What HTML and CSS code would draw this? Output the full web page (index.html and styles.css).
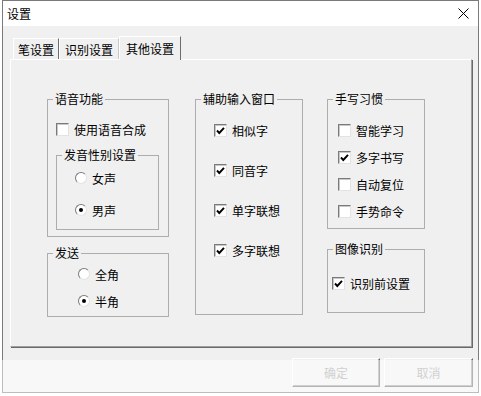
FILE: index.html
```html
<!DOCTYPE html>
<html lang="zh-CN">
<head>
    <meta charset="UTF-8">
    <meta name="viewport" content="width=device-width, initial-scale=1.0">
    <title>设置</title>
    <link rel="stylesheet" href="styles.css">
</head>
<body>

<div class="window">
  <div class="titlebar">
    <span class="title">设置</span>
    <svg class="close" width="11" height="11" viewBox="0 0 11 11">
      <path d="M0.5 0.5 L10.5 10.5 M10.5 0.5 L0.5 10.5" stroke="#000" stroke-width="1" fill="none"/>
    </svg>
  </div>

  <div class="dlg-body">
    <div class="tabs">
      <div class="tab tab-pen">笔设置</div>
      <div class="tab tab-rec">识别设置</div>
      <div class="tab tab-active">其他设置</div>
    </div>

    <div class="panel">
      <!-- 第一列 -->
      <div class="col col1">
        <div class="group g-voice">
          <span class="legend">语音功能</span>
          <div class="row voice-row"><span class="ck"></span>使用语音合成</div>
          <div class="group g-gender">
            <span class="legend">发音性别设置</span>
            <div class="row"><span class="rd"></span>女声</div>
            <div class="row"><span class="rd on"></span>男声</div>
          </div>
        </div>
        <div class="group g-send">
          <span class="legend">发送</span>
          <div class="row"><span class="rd"></span>全角</div>
          <div class="row"><span class="rd on"></span>半角</div>
        </div>
      </div>

      <!-- 第二列 -->
      <div class="col col2">
        <div class="group g-assist">
          <span class="legend">辅助输入窗口</span>
          <div class="row"><span class="ck on"><svg viewBox="0 0 11 11"><path d="M2 5.5 L4.3 8 L9 2.8"/></svg></span>相似字</div>
          <div class="row"><span class="ck on"><svg viewBox="0 0 11 11"><path d="M2 5.5 L4.3 8 L9 2.8"/></svg></span>同音字</div>
          <div class="row"><span class="ck on"><svg viewBox="0 0 11 11"><path d="M2 5.5 L4.3 8 L9 2.8"/></svg></span>单字联想</div>
          <div class="row"><span class="ck on"><svg viewBox="0 0 11 11"><path d="M2 5.5 L4.3 8 L9 2.8"/></svg></span>多字联想</div>
        </div>
      </div>

      <!-- 第三列 -->
      <div class="col col3">
        <div class="group g-habit">
          <span class="legend">手写习惯</span>
          <div class="row"><span class="ck"></span>智能学习</div>
          <div class="row"><span class="ck on"><svg viewBox="0 0 11 11"><path d="M2 5.5 L4.3 8 L9 2.8"/></svg></span>多字书写</div>
          <div class="row"><span class="ck"></span>自动复位</div>
          <div class="row"><span class="ck"></span>手势命令</div>
        </div>
        <div class="group g-image">
          <span class="legend">图像识别</span>
          <div class="row"><span class="ck on"><svg viewBox="0 0 11 11"><path d="M2 5.5 L4.3 8 L9 2.8"/></svg></span>识别前设置</div>
        </div>
      </div>
    </div>

    <div class="buttons">
      <button class="btn btn-ok" disabled>确定</button>
      <button class="btn btn-cancel" disabled>取消</button>
    </div>
  </div>
</div>

<div class="overlay"></div>

</body>
</html>
```

FILE: styles.css
```css
* { box-sizing: border-box; }

body {
  margin: 0;
  width: 481px;
  height: 396px;
  background: #fff;
  position: relative;
  overflow: hidden;
  font-family: "Noto Sans CJK SC", "Noto Sans", sans-serif;
  font-size: 12px;
  color: #000;
}

.window {
  margin-left: 2px;
  width: 477px;
  height: 393px;
  border: 1px solid #7a7a7a;
  background: #f0f0f0;
}

/* barra de titulo */
.titlebar {
  height: 25px;
  background: #fff;
  display: flex;
  align-items: center;
  justify-content: space-between;
  padding: 0 9px 0 4px;
}

.title { line-height: 16px; }

.close { display: block; }

.dlg-body {
  padding: 10px 5px 0 7px;
}

/* pestañas */
.tabs {
  display: flex;
  align-items: flex-end;
  height: 23px;
  padding-left: 3px;
}

.tab {
  height: 21px;
  display: flex;
  align-items: center;
  justify-content: center;
  border-top: 1px solid #fff;
  border-left: 1px solid #fff;
  border-right: 1px solid #6d6d6d;
  background: #f0f0f0;
}

.tab-pen { width: 46px; }
.tab-rec { width: 60px; border-right-color: #c8c8c8; }

.tab-active {
  width: 62px;
  height: 24px;
  margin-bottom: -1px;
  position: relative;
  z-index: 1;
  padding-bottom: 1px;
}

.panel {
  width: 462px;
  height: 288px;
  border-top: 1px solid #fff;
  border-left: 1px solid #fff;
  border-right: 1px solid #a0a0a0;
  border-bottom: 1px solid #a0a0a0;
  box-shadow: 1px 1px 0 #696969;
  display: flex;
  padding: 39px 0 0 36px;
}

.col { display: flex; flex-direction: column; }
.col1 { width: 122px; margin-right: 26px; }
.col2 { width: 108px; margin-right: 24px; }
.col3 { width: 98px; }

/* cuadros de grupo */
.group {
  position: relative;
  border: 1px solid #adadad;
  display: flex;
  flex-direction: column;
}

.legend {
  position: absolute;
  top: -9px;
  left: 5px;
  padding: 0 2px;
  line-height: 16px;
  background: #f0f0f0;
  white-space: nowrap;
}

.row {
  display: flex;
  align-items: center;
  height: 20px;
  gap: 5px;
  white-space: nowrap;
}

.g-voice { height: 138px; }
.voice-row { margin-top: 19px; padding-left: 8px; }

.g-gender {
  height: 75px;
  margin: 16px 9px 0 8px;
  padding: 12px 0 0 18px;
  gap: 12px;
}

.g-send {
  height: 64px;
  margin-top: 16px;
  padding: 10px 0 0 30px;
  gap: 7px;
}

.g-assist {
  height: 216px;
  padding: 20px 0 0 18px;
  gap: 20px;
}

.g-habit {
  height: 130px;
  padding: 20px 0 0 10px;
  gap: 7px;
}

.g-image {
  height: 64px;
  margin-top: 20px;
  padding: 23px 0 0 4px;
}

/* casillas */
.ck {
  width: 13px;
  height: 13px;
  flex: none;
  background: #fff;
  border: 1px solid;
  border-color: #7a7a7a #e3e3e3 #e3e3e3 #7a7a7a;
  box-shadow: inset 1px 1px 0 #c8c8c8;
  display: flex;
  align-items: center;
  justify-content: center;
}

.ck svg {
  width: 11px;
  height: 11px;
  fill: none;
  stroke: #000;
  stroke-width: 1.9;
}

.rd {
  width: 12px;
  height: 12px;
  flex: none;
  border-radius: 50%;
  background: #fff;
  border: 1px solid;
  border-color: #7a7a7a #e3e3e3 #e3e3e3 #7a7a7a;
  display: flex;
  align-items: center;
  justify-content: center;
}

.rd.on::after {
  content: "";
  width: 4px;
  height: 4px;
  border-radius: 50%;
  background: #000;
}

/* botones */
.buttons {
  display: flex;
  justify-content: flex-end;
  gap: 4px;
  margin-top: 11px;
}

.btn {
  height: 29px;
  font-family: inherit;
  font-size: 12px;
  color: #a0a0a0;
  background: #f0f0f0;
  border: 1px solid;
  border-color: #fff #696969 #696969 #fff;
  box-shadow: inset -1px -1px 0 #a0a0a0;
  padding: 0;
}

.btn-ok { width: 88px; }
.btn-cancel { width: 89px; }

/* franja clara inferior de la captura */
.overlay {
  position: absolute;
  left: 0;
  right: 0;
  top: 360px;
  height: 36px;
  background: rgba(255, 255, 255, 0.5);
}
```
